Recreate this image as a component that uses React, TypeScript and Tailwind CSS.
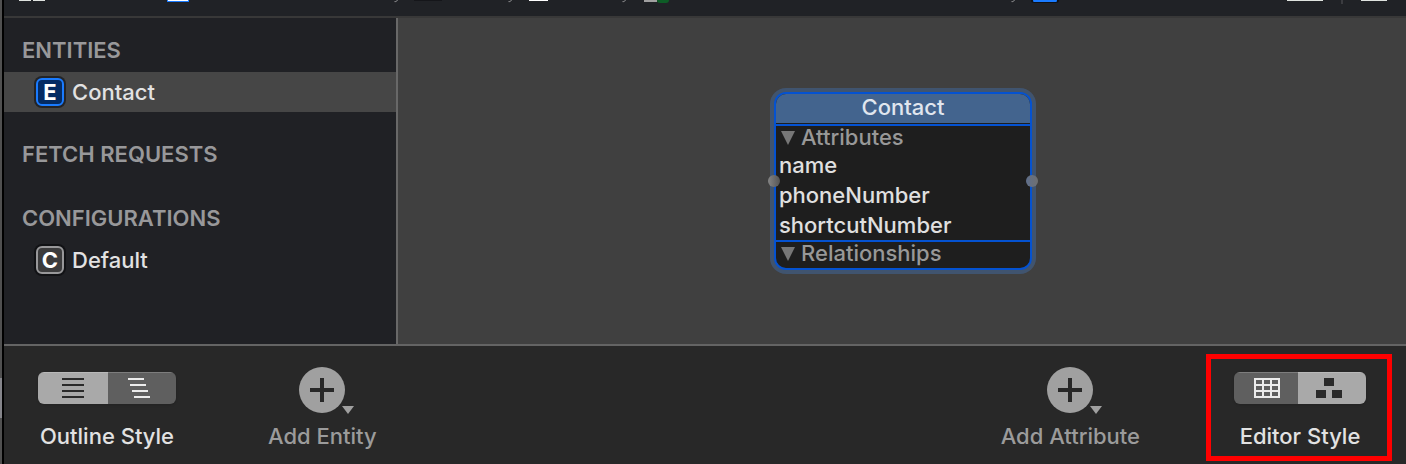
import type { ReactNode } from "react";
import { clsx } from "clsx";

const sections = [
  {
    title: "ENTITIES",
    items: [{ name: "Contact", letter: "E", selected: true }],
  },
  { title: "FETCH REQUESTS", items: [] },
  {
    title: "CONFIGURATIONS",
    items: [{ name: "Default", letter: "C", selected: false }],
  },
];

const attributes = ["name", "phoneNumber", "shortcutNumber"];

function Separator({ className }: { className?: string }) {
  return (
    <svg
      viewBox="0 0 4 3"
      className={clsx("h-[3px] w-1 shrink-0", className)}
      aria-hidden="true"
    >
      <path d="M3.5 0 L2.6 1.2 Q2.2 1.8 0.5 1.6" fill="none" stroke="#909193" />
    </svg>
  );
}

function PathBar() {
  return (
    <header className="flex h-[18px] items-start justify-between overflow-hidden border-b-2 border-[#383838] bg-[#202226]">
      <div className="flex shrink-0 items-start pl-[15px]">
        <span className="h-px w-3 bg-[#dfe3df]" />
        <span className="ml-0.5 h-px w-3 bg-[#dfe3df]" />
        <span className="ml-[122px] h-0.5 w-[22px] border-x border-b border-[#1a7bff] bg-white" />
        <Separator className="ml-[205px]" />
        <span className="ml-[16px] h-px w-7 bg-[#15161a]" />
        <Separator className="ml-[66px]" />
        <span className="ml-[17px] h-px w-[19px] bg-white" />
        <Separator className="ml-[74px]" />
        <span className="ml-[18px] h-0.5 w-[13px] bg-[#a0a0a0]" />
        <span className="h-[3px] w-3 rounded-b-full bg-[#0d5c26]" />
        <Separator className="ml-[342px]" />
        <span className="ml-[16px] h-[3px] w-7 rounded-b-md border-x-2 border-b border-[#101216] bg-[#1a7bff]" />
      </div>
      <div className="flex shrink-0 items-start pr-[19px]">
        <span className="h-px w-9 bg-[#dfe3df]" />
        <span className="mx-[18px] h-1 w-0.5 bg-[#3b3c40]" />
        <span className="h-px w-[26px] bg-[#dfe3df]" />
      </div>
    </header>
  );
}

function Sidebar() {
  return (
    <aside className="flex w-[394px] shrink-0 flex-col gap-5 border-r-2 border-[#686868] bg-[#202125] pt-2.5">
      {sections.map((section) => (
        <section key={section.title}>
          <h2 className="pl-[18px] font-semibold leading-[44px] text-[#98989a]">
            {section.title}
          </h2>
          {section.items.map((item) => (
            <button
              key={item.name}
              type="button"
              className={clsx(
                "flex h-10 w-full items-center gap-2 pl-8 text-[#e2e2e2]",
                item.selected && "bg-[#464646]"
              )}
            >
              <span
                className={clsx(
                  "flex size-7 items-center justify-center rounded-md border-2 font-bold text-white ring-2",
                  item.selected
                    ? "border-[#1a7bff] bg-[#042b63] ring-[#232427]"
                    : "border-[#98989a] bg-[#3b3b3c] ring-[#111215]"
                )}
                aria-hidden="true"
              >
                {item.letter}
              </span>
              {item.name}
            </button>
          ))}
        </section>
      ))}
    </aside>
  );
}

function GroupHeader({ children }: { children: ReactNode }) {
  return (
    <button
      type="button"
      className="flex w-full items-center gap-1.5 pl-[5px] leading-[23px] text-[#989898]"
    >
      <svg viewBox="0 0 14 14" className="size-3.5" aria-hidden="true">
        <path d="M0 0 H14 L7 14 Z" fill="#777777" />
      </svg>
      {children}
    </button>
  );
}

function EntityNode() {
  return (
    <div className="relative w-[258px]">
      <div className="overflow-hidden rounded-xl border-2 border-[#0452d1] bg-[#1e1e1e] ring-4 ring-[#40546f]">
        <h3 className="border-b border-[#1e1e1e] bg-[#43648e] pb-[3px] text-center leading-[26px] text-[#e0e6ee]">
          Contact
        </h3>
        <div className="border-y-2 border-[#0452d1]">
          <GroupHeader>Attributes</GroupHeader>
          <ul className="pt-px pl-[3px] leading-[30px] text-[#e0e0e0]">
            {attributes.map((attribute) => (
              <li key={attribute}>{attribute}</li>
            ))}
          </ul>
        </div>
        <div className="pb-[3px]">
          <GroupHeader>Relationships</GroupHeader>
        </div>
      </div>
      <span className="absolute top-1/2 -left-1.5 size-3 -translate-y-1/2 rounded-full bg-linear-to-r from-[#858585] to-[#555555]" />
      <span className="absolute top-1/2 -right-1.5 size-3 -translate-y-1/2 rounded-full bg-linear-to-r from-[#5f6f8c] to-[#6f6f6f]" />
    </div>
  );
}

function Segment({
  label,
  active,
  className,
  children,
}: {
  label: string;
  active?: boolean;
  className?: string;
  children: ReactNode;
}) {
  return (
    <button
      type="button"
      aria-label={label}
      aria-pressed={!!active}
      className={clsx(
        "flex h-8 items-center justify-center inset-shadow-[0_1px_0_#ffffff30]",
        active ? "bg-[#a9a9a9] text-[#2a2a2a]" : "bg-[#5f5f5f] text-[#ececec]",
        className
      )}
    >
      {children}
    </button>
  );
}

function StyleControl({ label, children }: { label: string; children: ReactNode }) {
  return (
    <div
      role="group"
      aria-label={label}
      className="flex flex-col items-center gap-[18px] leading-7 text-[#e2e2e2]"
    >
      <div className="flex overflow-hidden rounded-md shadow">{children}</div>
      <span className="whitespace-nowrap">{label}</span>
    </div>
  );
}

function AddButton({ label }: { label: string }) {
  return (
    <button
      type="button"
      className="flex flex-col items-center gap-[7px] pt-[21px] leading-7 text-[#9b9b9b]"
    >
      <svg viewBox="0 0 70 48" className="h-12 w-[70px]" aria-hidden="true">
        <circle cx="35" cy="23" r="23" fill="#a0a0a0" />
        <path d="M35 11 V35 M23 23 H47" stroke="#282828" strokeWidth="4" />
        <path d="M55 39 H67 L61 47 Z" fill="#a0a0a0" />
      </svg>
      <span className="whitespace-nowrap">{label}</span>
    </button>
  );
}

function Toolbar() {
  return (
    <footer className="flex items-start justify-between border-t-2 border-[#646464] bg-[#282828]">
      <div className="flex items-start gap-[92px] pl-[34px]">
        <div className="pt-[26px]">
          <StyleControl label="Outline Style">
            <Segment label="Flat list" active className="w-[70px]">
              <svg viewBox="0 0 22 20" className="h-5 w-[22px]" fill="currentColor">
                <path d="M0 0h22v2H0zM0 6h22v2H0zM0 12h22v2H0zM0 18h22v2H0z" />
              </svg>
            </Segment>
            <Segment label="Hierarchy" className="w-[68px] pr-1.5">
              <svg viewBox="0 0 22 20" className="h-5 w-[22px]" fill="currentColor">
                <path d="M0 0h16v2H0zM2 6h16v2H2zM4 12h16v2H4zM6 18h16v2H6z" />
              </svg>
            </Segment>
          </StyleControl>
        </div>
        <AddButton label="Add Entity" />
      </div>
      <div className="flex items-start gap-[66px] pr-3.5 pb-[3px]">
        <AddButton label="Add Attribute" />
        <div className="mt-2 border-5 border-[#ff0000] pt-[13px] pr-[21px] pb-1.5 pl-[23px]">
          <StyleControl label="Editor Style">
            <Segment label="Table" className="w-16 pl-0.5">
              <svg viewBox="0 0 26 20" className="h-5 w-[26px]" fill="currentColor">
                <path
                  fillRule="evenodd"
                  d="M0 0h26v20H0zM2 2v4h6V2zM10 2v4h6V2zM18 2v4h6V2zM2 8v4h6V8zM10 8v4h6V8zM18 8v4h6V8zM2 14v4h6v-4zM10 14v4h6v-4zM18 14v4h6v-4z"
                />
              </svg>
            </Segment>
            <Segment label="Graph" active className="w-[68px] pr-1.5">
              <svg viewBox="0 0 26 20" className="h-5 w-[26px]" fill="currentColor">
                <path d="M8 0h10v8H8zM0 12h10v8H0zM16 12h10v8H16z" />
              </svg>
            </Segment>
          </StyleControl>
        </div>
      </div>
    </footer>
  );
}

export default function App() {
  return (
    <div className="flex min-h-screen bg-[#282828] font-['Inter',sans-serif] text-[22px] font-medium">
      <div className="flex w-1 shrink-0 flex-col border-r-2 border-black bg-[#505050]">
        <div className="flex-1" />
        <div className="mb-[46px] h-10 bg-[#85858a]" />
      </div>
      <div className="flex min-w-0 flex-1 flex-col">
        <PathBar />
        <div className="flex flex-1">
          <Sidebar />
          <main className="flex flex-1 items-center justify-center bg-[#404040] pl-0.5">
            <EntityNode />
          </main>
        </div>
        <Toolbar />
      </div>
    </div>
  );
}
